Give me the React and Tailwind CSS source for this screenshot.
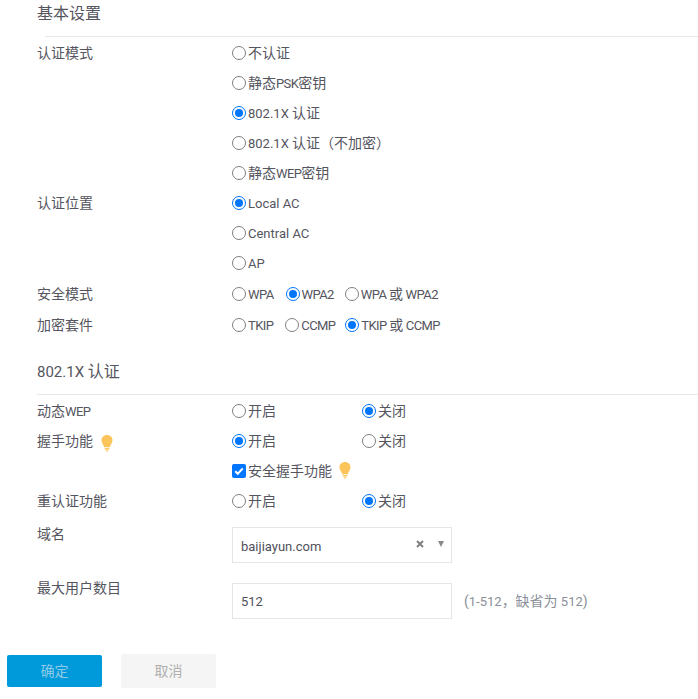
import React from 'react';

// latin runs sit a bit smaller than the CJK around them
const L = ({ children, big, caps }) => (
  <span className={`${big ? 'text-[15px]' : 'text-[13px]'} ${caps ? 'tracking-[-0.6px]' : ''}`}>{children}</span>
);

const Radio = ({ checked, label, className = '' }) => (
  <span className={`flex items-center h-[20px] ${className}`}>
    <span
      className={`mt-[2px] w-[14px] h-[14px] rounded-full border-[1.5px] bg-white flex items-center justify-center shrink-0 ${
        checked ? 'border-[#0075ff]' : 'border-[#808080]'
      }`}
    >
      {checked && <span className="w-[8px] h-[8px] rounded-full bg-[#0075ff]" />}
    </span>
    <span className="ml-[2px] pt-[2px] whitespace-pre leading-[20px]">{label}</span>
  </span>
);

const Bulb = ({ className = '' }) => (
  <svg viewBox="0 0 12 17" className={`w-[12px] h-[17px] ${className}`}>
    <path d="M6 0C2.7 0 .5 2.4.5 5.3c0 2.6 2 4.1 2.7 7h5.6c.7-2.9 2.7-4.4 2.7-7C11.500 2.400 9.300 0 6 0z" fill="#fcc55b" />
    <path d="M3.700 13h4.600v1.600H3.700zM4.500 15.200h3L6.800 16.500H5.200z" fill="#fcc55b" />
  </svg>
);

const Row = ({ label, children, h = 'h-[30px]', extra }) => (
  <div className={`flex items-center ${h}`}>
    <div className="w-[232px] pl-[37px] flex items-center shrink-0">
      <span className="pt-[2px] leading-[20px]">{label}</span>
      {extra}
    </div>
    {children}
  </div>
);

const SectionTitle = ({ title, lineLeft }) => (
  <div>
    <div className="pl-[37px] pt-px text-[16px] leading-[24px]">{title}</div>
    <div className={`mt-[10px] h-px bg-[#e8e8e8] ${lineLeft}`} />
  </div>
);

const App = () => {
  return (
    <div
      className="w-[698px] h-[699px] bg-white text-[14px] text-[#555560] overflow-hidden"
      style={{ fontFamily: 'Roboto, "Noto Sans CJK SC", sans-serif' }}
    >
      <div className="pt-px">
        <SectionTitle title="基本设置" lineLeft="ml-[45px]" />
      </div>

      <div>
        <Row label="认证模式"><Radio label="不认证" /></Row>
        <Row><Radio label={<>静态<L caps>PSK</L>密钥</>} /></Row>
        <Row><Radio checked label={<><L>802.1X </L>认证</>} /></Row>
        <Row><Radio label={<><L>802.1X </L>认证（不加密）</>} /></Row>
        <Row><Radio label={<>静态<L caps>WEP</L>密钥</>} /></Row>
        <Row label="认证位置"><Radio checked label={<L>Local AC</L>} /></Row>
        <Row><Radio label={<L>Central AC</L>} /></Row>
        <Row><Radio label={<L>AP</L>} /></Row>
        <Row label="安全模式" h="h-[32px]">
          <Radio label={<L caps>WPA</L>} />
          <Radio checked label={<L caps>WPA2</L>} className="ml-[12px]" />
          <Radio label={<><L caps>WPA </L>或<L caps> WPA2</L></>} className="ml-[11px]" />
        </Row>
        <Row label="加密套件">
          <Radio label={<L caps>TKIP</L>} />
          <Radio label={<L caps>CCMP</L>} className="ml-[12px]" />
          <Radio checked label={<><L caps>TKIP </L>或<L caps> CCMP</L></>} className="ml-[10px]" />
        </Row>
      </div>

      <div className="mt-[20px]">
        <SectionTitle title={<><L big>802.1X </L>认证</>} lineLeft="ml-[37px]" />
      </div>

      <div>
        <Row label={<>动态<L caps>WEP</L></>}>
          <div className="w-[130px]"><Radio label="开启" /></div>
          <Radio checked label="关闭" />
        </Row>
        <Row label="握手功能" extra={<Bulb className="ml-[8px] mt-[6px]" />}>
          <div className="w-[130px]"><Radio checked label="开启" /></div>
          <Radio label="关闭" />
        </Row>
        <Row>
          <span className="flex items-center">
            <span className="mt-[2px] w-[14px] h-[14px] rounded-[2px] bg-[#0075ff] flex items-center justify-center">
              <svg viewBox="0 0 12 12" className="w-[12px] h-[12px]">
                <path d="M2.200 6.200l2.600 2.600 5-5.400" fill="none" stroke="#fff" strokeWidth="2" />
              </svg>
            </span>
            <span className="ml-[2px] pt-[2px] leading-[20px]">安全握手功能</span>
            <Bulb className="ml-[7px]" />
          </span>
        </Row>
        <Row label="重认证功能">
          <div className="w-[130px]"><Radio label="开启" /></div>
          <Radio checked label="关闭" />
        </Row>
      </div>

      <div className="mt-[12px] flex items-start">
        <div className="w-[232px] pl-[37px] shrink-0 leading-[14px]">域名</div>
        <div className="relative w-[220px] h-[36px] border border-[#e6e6e6] pl-[8px] pt-[4px] flex items-center text-[#50505a]">
          <span className="text-[13px]">baijiayun.com</span>
          <svg viewBox="0 0 8 8" className="absolute left-[183px] top-[12px] w-[8px] h-[8px]">
            <path d="M1 1l6 6M7 1L1 7" stroke="#808080" strokeWidth="2" />
          </svg>
          <span className="absolute left-[205px] top-[13px] w-0 h-0 border-x-[3px] border-x-transparent border-t-[6px] border-t-[#888]" />
        </div>
      </div>

      <div className="mt-[20px] flex items-start">
        <div className="w-[232px] pl-[37px] shrink-0 leading-[14px] -mt-[2px]">最大用户数目</div>
        <div className="w-[220px] h-[36px] border border-[#e6e6e6] pl-[8px] pt-[2px] flex items-center text-[#50505a]"><L>512</L></div>
        <div className="ml-[12px] h-[36px] flex items-center text-[#8a8f99]">
          <span className="whitespace-pre">(<L>1-512</L>，缺省为<L> 512</L>)</span>
        </div>
      </div>

      <div className="mt-[35px] pl-[7px] flex items-center">
        <button className="w-[95px] h-[32px] rounded-[2px] bg-[#0099da] text-[#8fcbe8]">确定</button>
        <button className="ml-[19px] w-[95px] h-[34px] rounded-[2px] bg-[#f5f5f5] text-[#b0b0b0]">取消</button>
      </div>
    </div>
  );
};

export default App;
